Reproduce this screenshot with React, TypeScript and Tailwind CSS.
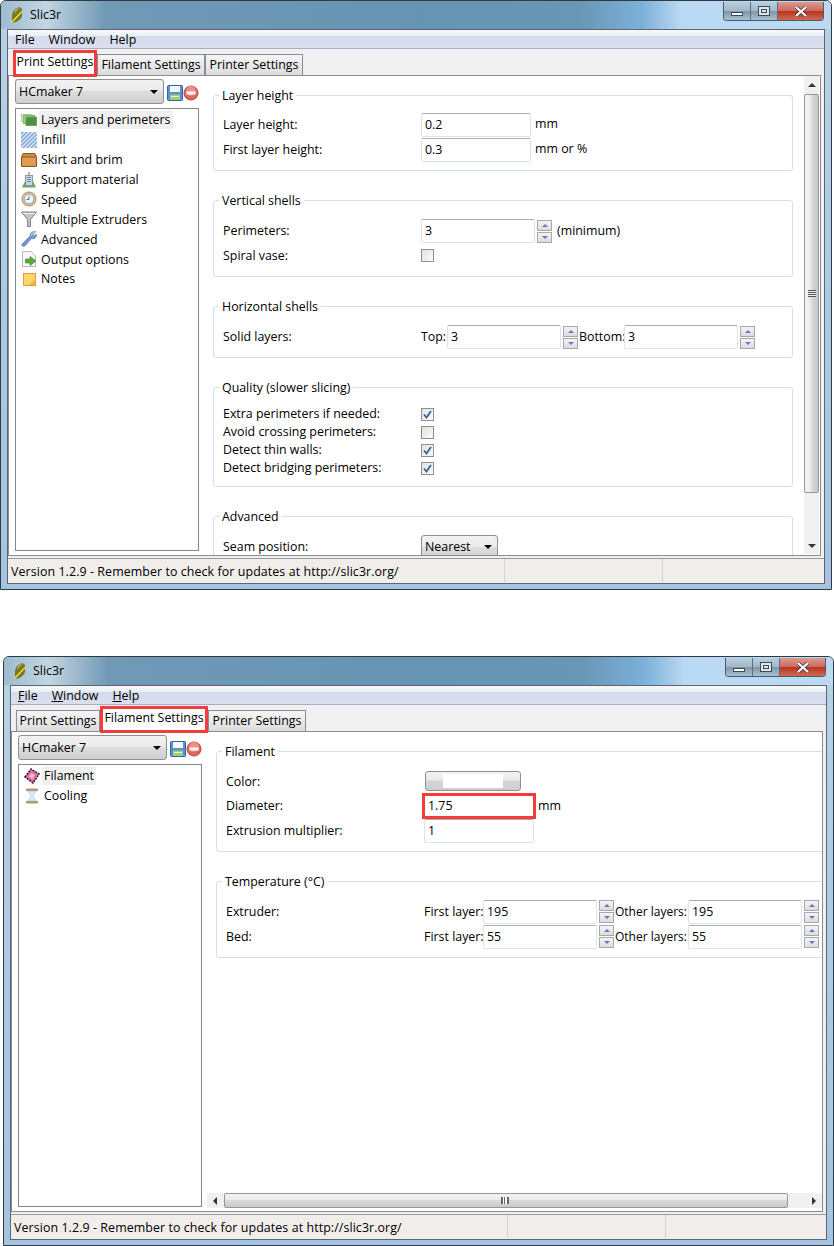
import type { ReactNode } from "react"

const floppy = (
  <svg viewBox="0 0 16 16" className="h-4 w-4 shrink-0">
    <rect x="0.5" y="0.5" width="15" height="15" rx="1" fill="#5b8fd6" stroke="#2f62ad" />
    <rect x="3" y="1" width="10" height="6" fill="#f4f7fb" />
    <rect x="3" y="9.5" width="10" height="5.5" fill="#9ed070" />
    <rect x="4" y="11" width="8" height="1" fill="#e7f3dc" />
  </svg>
)

const stopIcon = (
  <svg viewBox="0 0 16 16" className="h-4 w-4 shrink-0">
    <circle cx="8" cy="8" r="7" fill="#e0655f" stroke="#b9423c" />
    <circle cx="8" cy="6" r="5" fill="#ef8e88" />
    <rect x="3.5" y="6.5" width="9" height="3" fill="#fff" />
  </svg>
)

const logo = (
  <svg viewBox="0 0 12 16" className="h-[16px] w-3 shrink-0">
    <path d="M1 9 C1 5 3 2 7 0.5 C9 0 11 1 11 3 L11 8 C11 11 8 14 4 15.5 C2 16 1 15 1 13 Z" fill="#77752c" />
    <path d="M4 1.5 L9 1 L3 7 Z" fill="#a5a35a" />
    <path d="M1 15 L11 4.5" stroke="#ebe21c" strokeWidth="1.7" />
  </svg>
)

const icons: Record<string, ReactNode> = {
  layers: (
    <svg viewBox="0 0 16 16" className="h-4 w-4">
      <rect x="0.5" y="2.5" width="10" height="7" fill="#d6efc9" stroke="#a6cf98" />
      <rect x="2.5" y="3.5" width="11" height="8" fill="#9bcf86" stroke="#7fb46c" />
      <rect x="5" y="5" width="10.5" height="8.5" fill="#4d8f45" stroke="#6ba362" />
    </svg>
  ),
  infill: (
    <svg viewBox="0 0 16 16" className="h-4 w-4">
      <rect width="16" height="16" fill="#dce8f6" />
      <path d="M-2 4 L4 -2 M-2 8 L8 -2 M-2 12 L12 -2 M-2 16 L16 -2 M2 16 L16 2 M6 16 L16 6 M10 16 L16 10 M14 16 L16 14" stroke="#7fa3d3" strokeWidth="1.4" />
    </svg>
  ),
  box: (
    <svg viewBox="0 0 16 16" className="h-4 w-4">
      <path d="M2 1.5 H14 L15.5 5 V14.5 H0.5 V5 Z" fill="#c98b4a" stroke="#8a5a26" />
      <rect x="1.5" y="5" width="13" height="8.5" fill="#e59a52" />
      <path d="M1 5 H15" stroke="#8a5a26" />
    </svg>
  ),
  building: (
    <svg viewBox="0 0 16 16" className="h-4 w-4">
      <path d="M8 0 V3" stroke="#d43c3c" />
      <rect x="4.5" y="3.5" width="7" height="10" fill="#c9d4df" stroke="#8797a8" />
      <path d="M6 5.5 H10 M6 7.5 H10 M6 9.5 H10" stroke="#6f8fb4" />
      <path d="M1 15.5 L3.5 10 H4.5 V14 H11.5 V10 H12.5 L15 15.5 Z" fill="#6da35f" />
    </svg>
  ),
  clock: (
    <svg viewBox="0 0 16 16" className="h-4 w-4">
      <circle cx="8" cy="8" r="7" fill="#dcc49a" stroke="#a88a58" />
      <circle cx="8" cy="8" r="4.8" fill="#f3f7fb" stroke="#8ba7c6" />
      <path d="M8 5 V8.5 H5.5" stroke="#4d6b94" fill="none" />
    </svg>
  ),
  funnel: (
    <svg viewBox="0 0 16 16" className="h-4 w-4">
      <path d="M0.5 1 H15.5 L9.5 8.5 V15.5 H6.5 V8.5 Z" fill="#c4c4c4" stroke="#7f7f7f" />
      <path d="M2 2.5 H14" stroke="#f2f2f2" />
    </svg>
  ),
  wrench: (
    <svg viewBox="0 0 16 16" className="h-4 w-4">
      <path d="M1 13 L9 5 C9 2 11 0 15 0.5 L12 3.5 L13 5 L15.5 3 C16 7 13 8.5 10.5 7.5 L4 15 C2 16 0 15 1 13 Z" fill="#6f97cf" stroke="#5d7ea8" strokeWidth="0.6" />
      <path d="M10 5 L12 1.5 L15 1" stroke="#d0d0d0" fill="none" />
    </svg>
  ),
  output: (
    <svg viewBox="0 0 16 16" className="h-4 w-4">
      <path d="M1.5 0.5 H10 L14.5 5 V15.5 H1.5 Z" fill="#f7f7f7" stroke="#b8b8b8" />
      <path d="M4.5 8 H9 V5.5 L15 10 L9 14.5 V12 H4.5 Z" fill="#58a83c" stroke="#3f7f2a" strokeWidth="0.6" />
    </svg>
  ),
  notes: (
    <svg viewBox="0 0 16 16" className="h-4 w-4">
      <rect x="2.5" y="2.5" width="12" height="12" fill="#f7d76c" stroke="#e79a3a" />
      <path d="M8 14 L14 8 V14 Z" fill="#f5b342" />
    </svg>
  ),
  filament: (
    <svg viewBox="0 0 16 16" className="h-4 w-4">
      <path d="M1 9 L7 1 L15 6 L9 15 Z" fill="#ee6aa6" stroke="#222" strokeWidth="1.5" strokeDasharray="2 1" />
      <path d="M5 8.5 L7.5 5 L11 7 L8.5 11 Z" fill="#ffb6d6" />
    </svg>
  ),
  cooling: (
    <svg viewBox="0 0 16 16" className="h-4 w-4">
      <rect x="2" y="0.5" width="12" height="2.5" rx="1" fill="#b8916a" />
      <rect x="2" y="13" width="12" height="2.5" rx="1" fill="#b8916a" />
      <path d="M3.5 3 H12.5 L8.8 8 L12.5 13 H3.5 L7.2 8 Z" fill="#dbeafa" stroke="#a8c2de" strokeWidth="0.6" />
    </svg>
  ),
}

function Spin() {
  return (
    <div className="ml-[2px] flex w-[15px] shrink-0 flex-col gap-px">
      <div className="flex h-[11px] items-center justify-center border border-[#a8a8a8] bg-[linear-gradient(#f4f4f4,#dcdcdc)]">
        <div className="h-0 w-0 border-x-[3px] border-b-[3px] border-x-transparent border-b-[#6b77c0]" />
      </div>
      <div className="flex h-[11px] items-center justify-center border border-[#a8a8a8] bg-[linear-gradient(#f4f4f4,#dcdcdc)]">
        <div className="h-0 w-0 border-x-[3px] border-t-[3px] border-x-transparent border-t-[#6b77c0]" />
      </div>
    </div>
  )
}

function Input({ value, wide }: { value: string; wide?: boolean }) {
  return (
    <div
      className={
        (wide ? "w-[114px]" : "w-[110px]") +
        " flex h-[24px] shrink-0 items-center rounded-[2px] border border-[#dde3ea] border-t-[#abadb3] bg-white pl-[3px] pt-[1px]"
      }
    >
      {value}
    </div>
  )
}

function Check({ on }: { on?: boolean }) {
  return (
    <div className="flex h-[13px] w-[13px] items-center justify-center border border-[#8e8f8f] bg-[linear-gradient(135deg,#e2e2e2,#fbfbfb)]">
      {on && (
        <svg viewBox="0 0 11 11" className="h-[11px] w-[11px]">
          <path d="M2 5.5 L4.5 8.5 L9 2" fill="none" stroke="#3c5f9c" strokeWidth="1.8" />
        </svg>
      )}
    </div>
  )
}

function Row({ label, h, children }: { label: string; h: string; children?: ReactNode }) {
  return (
    <div className={h + " flex items-center whitespace-nowrap"}>
      <span className="w-[198px] shrink-0 pt-[1px]">{label}</span>
      {children}
    </div>
  )
}

function Group({ title, className, children }: { title: string; className: string; children: ReactNode }) {
  return (
    <div className={"relative shrink-0 rounded-[3px] border border-[#d5dfe5] pl-[9px] " + className}>
      <span className="absolute -top-[9px] left-[5px] bg-white px-[3px] leading-[18px]">{title}</span>
      {children}
    </div>
  )
}

function Combo({ text, className }: { text: string; className: string }) {
  return (
    <div className={"flex items-center justify-between rounded-[3px] border border-[#8e8f8f] bg-[linear-gradient(#f2f2f2_0%,#ebebeb_45%,#dddddd_50%,#cfcfcf_100%)] pl-[3px] pr-[5px] " + className}>
      <span className="pt-[1px]">{text}</span>
      <div className="h-0 w-0 border-x-[4px] border-t-[4px] border-x-transparent border-t-black" />
    </div>
  )
}

function Tree({ items }: { items: [string, string][] }) {
  return (
    <div className="ml-[6px] mt-[4px] h-[443px] w-[184px] border border-[#828790] bg-white pt-[1px]">
      {items.map(([icon, label], i) => (
        <div key={label} className="flex h-[19.875px] items-center pl-[5px]">
          <div className="mr-[2px] w-[16px] shrink-0">{icons[icon]}</div>
          <span className={(i === 0 ? "bg-[#f0f0f0] " : "") + "px-[2px] leading-[19px]"}>{label}</span>
        </div>
      ))}
    </div>
  )
}

function Tab({ label, selected, boxed, w }: { label: string; selected?: boolean; boxed?: boolean; w: string }) {
  return (
    <div
      className={
        w +
        " relative flex items-center justify-center whitespace-nowrap border border-[#898c95] " +
        (selected
          ? "z-10 h-[25px] border-b-0 bg-white pb-[2px]"
          : "mb-[-1px] h-[22px] bg-[linear-gradient(#f6f6f6,#dcdcdc)]")
      }
    >
      {label}
      {boxed && <div className="pointer-events-none absolute -inset-x-[1px] -bottom-[2px] -top-[1px] border-[3px] border-[#f33b3b]" />}
    </div>
  )
}

function Caption() {
  return (
    <div className="absolute right-[7px] top-[1px] flex h-[19px] overflow-hidden rounded-b-[4px] border border-t-0 border-[#4a5a68]">
      <div className="flex w-[27px] items-end justify-center border-r border-[#5d6d7b] bg-[linear-gradient(#b9cede,#a3b8c8_48%,#7f97a9_52%,#aac0cf)] pb-[4px]">
        <div className="h-[4px] w-[12px] border border-[#3c4a55] bg-white" />
      </div>
      <div className="flex w-[27px] items-center justify-center border-r border-[#5d6d7b] bg-[linear-gradient(#b9cede,#a3b8c8_48%,#7f97a9_52%,#aac0cf)]">
        <div className="h-[10px] w-[12px] border border-[#3c4a55] bg-[#dbe6ee] p-[2px]">
          <div className="h-full w-full border border-[#3c4a55]" />
        </div>
      </div>
      <div className="flex w-[45px] items-center justify-center bg-[linear-gradient(#dd9a90,#cc6a5e_48%,#b8331f_52%,#d06a55)]">
        <svg viewBox="0 0 14 11" className="h-[11px] w-[14px]">
          <path d="M2 1 L12 10 M12 1 L2 10" stroke="#3c3c3c" strokeWidth="3.6" />
          <path d="M2 1 L12 10 M12 1 L2 10" stroke="#fff" strokeWidth="2.2" />
        </svg>
      </div>
    </div>
  )
}

function Window({ className, tab, tree, children, scrollbar, underlined }: {
  className: string
  tab: number
  tree: [string, string][]
  children: ReactNode
  scrollbar: ReactNode
  underlined?: boolean
}) {
  return (
    <div className={"relative h-[590px] overflow-hidden rounded-t-[6px] border border-[#2e3a44] bg-[linear-gradient(#b9d1e4,#a9c8e4_60%,#a6c4df)] " + className}>
      <div className="flex h-[28px] items-center bg-[linear-gradient(90deg,#9dbbd0_0px,#c3d5e0_45px,#7099b6_105px,#6894b3_420px,#6b97b7_580px,#7cb0d8_640px,#b9d8f3_680px,#bcd9f0_100%)] pl-[10px]">
        {logo}
        <span className="ml-[7px] pt-[1px]">Slic3r</span>
      </div>
      <Caption />
      <div className="mx-[6px] h-[555px] border border-[#5b6670] bg-[#f0f0f0]">
        <div className="flex h-[19px] items-center gap-[14px] border-b border-[#a9aec4] bg-[linear-gradient(#f7f8fb,#eef0f8_30%,#d6dcec_35%,#d9dfee)] pl-[7px] pt-[2px]">
          <span className={underlined ? "[&::first-letter]:underline" : ""}>File</span>
          <span className={underlined ? "[&::first-letter]:underline" : ""}>Window</span>
          <span className={underlined ? "[&::first-letter]:underline" : ""}>Help</span>
        </div>
        <div className="flex h-[26px] items-end pl-[5px]">
          <Tab label="Print Settings" w="w-[84px]" selected={tab === 0} boxed={tab === 0} />
          <Tab label="Filament Settings" w="w-[108px]" selected={tab === 1} boxed={tab === 1} />
          <Tab label="Printer Settings" w="w-[98px]" />
        </div>
        <div className="mr-[3px] flex h-[481px] border border-[#898c95] bg-white">
          <div className="w-[195px] shrink-0">
            <div className="ml-[6px] mt-[3px] flex items-center">
              <Combo text="HCmaker 7" className="h-[25px] w-[149px]" />
              <div className="ml-[3px] mt-[2px]">{floppy}</div>
              <div className="mt-[2px]">{stopIcon}</div>
            </div>
            <Tree items={tree} />
          </div>
          {children}
          {scrollbar}
        </div>
        <div className="mt-[2px] flex h-[24px] items-center border-t border-[#9a9a9a] bg-[#f0edeb]">
          <span className="ml-[3px] w-[493px] whitespace-nowrap pt-[3px] tracking-[0.09px]">Version 1.2.9 - Remember to check for updates at http://slic3r.org/</span>
          <div className="h-full w-[158px] border-l border-[#d4d4d4]" />
          <div className="h-full border-l border-[#d4d4d4]" />
        </div>
      </div>
    </div>
  )
}

function PrintBody() {
  return (
    <div className="flex h-full w-[600px] shrink-0 flex-col gap-[29px] overflow-hidden pl-[9px] pt-[19px]">
      <Group title="Layer height" className="h-[76px] w-[580px] pt-[16px]">
        <Row label="Layer height:" h="h-[25px]"><Input value="0.2" /><span className="ml-[4px]">mm</span></Row>
        <Row label="First layer height:" h="h-[25px]"><Input value="0.3" /><span className="ml-[4px]">mm or %</span></Row>
      </Group>
      <Group title="Vertical shells" className="h-[77px] w-[580px] pt-[18px]">
        <Row label="Perimeters:" h="h-[24px]"><Input value="3" wide /><Spin /><span className="ml-[5px]">(minimum)</span></Row>
        <Row label="Spiral vase:" h="h-[25px]"><Check /></Row>
      </Group>
      <Group title="Horizontal shells" className="h-[52px] w-[580px] pt-[18px]">
        <Row label="Solid layers:" h="h-[24px]">
          <span className="w-[26px] pt-[1px]">Top:</span><Input value="3" wide /><Spin />
          <span className="ml-px w-[45px] pt-[1px]">Bottom:</span><Input value="3" wide /><Spin />
        </Row>
      </Group>
      <Group title="Quality (slower slicing)" className="h-[100px] w-[580px] pt-[17px]">
        <Row label="Extra perimeters if needed:" h="h-[18px]"><Check on /></Row>
        <Row label="Avoid crossing perimeters:" h="h-[18px]"><Check /></Row>
        <Row label="Detect thin walls:" h="h-[18px]"><Check on /></Row>
        <Row label="Detect bridging perimeters:" h="h-[18px]"><Check on /></Row>
      </Group>
      <Group title="Advanced" className="h-[90px] w-[580px] pt-[17px]">
        <Row label="Seam position:" h="h-[25px]"><Combo text="Nearest" className="mt-[1px] h-[25px] w-[77px]" /></Row>
      </Group>
    </div>
  )
}

function FilamentBody() {
  const temp = (label: string, value: string) => (
    <Row label={label} h="h-[25px]">
      <span className="w-[59px] pt-[1px]">First layer:</span><Input value={value} wide /><Spin />
      <span className="ml-px w-[73px] pt-[1px] text-[12px]">Other layers:</span><Input value={value} wide /><Spin />
    </Row>
  )
  return (
    <div className="flex h-full min-w-0 flex-1 flex-col">
      <div className="flex min-h-0 flex-1 flex-col gap-[29px] overflow-hidden pl-[9px] pt-[19px]">
        <Group title="Filament" className="h-[101px] w-[660px] pt-[19px]">
          <Row label="Color:" h="h-[22px]">
            <div className="mb-[3px] ml-px flex h-[20px] w-[96px] items-center justify-center rounded-[3px] border border-[#8e8f8f] bg-[linear-gradient(#f2f2f2,#ebebeb_45%,#d4d4d4_50%,#cfcfcf)]">
              <div className="h-[14px] w-[60px] bg-white" />
            </div>
          </Row>
          <Row label="Diameter:" h="h-[25px]">
            <div className="relative">
              <Input value="1.75" />
              <div className="absolute -inset-x-[2px] -bottom-px -top-px border-[3px] border-[#f33b3b]" />
            </div>
            <span className="ml-[4px] pt-[1px]">mm</span>
          </Row>
          <Row label="Extrusion multiplier:" h="h-[25px]"><Input value="1" /></Row>
        </Group>
        <Group title="Temperature (°C)" className="h-[77px] w-[660px] pt-[17px]">
          {temp("Extruder:", "195")}
          {temp("Bed:", "55")}
        </Group>
      </div>
      <div className="mb-[3px] flex h-[15px] shrink-0 items-stretch bg-[#f0f0f0]">
        <div className="flex w-[16px] items-center justify-center">
          <div className="h-0 w-0 border-y-[4px] border-r-[4px] border-y-transparent border-r-[#333]" />
        </div>
        <div className="relative ml-px w-[564px] rounded-[2px] border border-[#979797] bg-[linear-gradient(#f2f2f2,#ebebeb_45%,#d9d9d9_50%,#c9c9c9)]">
          <div className="absolute left-[276px] top-[3px] h-[7px] w-[8px] border-x-[2px] border-[#666] bg-[linear-gradient(90deg,#fff_30%,#666_30%,#666_60%,#fff_60%)]" />
        </div>
        <div className="flex flex-1 items-center justify-end pr-[6px]">
          <div className="h-0 w-0 border-y-[4px] border-l-[4px] border-y-transparent border-l-[#333]" />
        </div>
      </div>
    </div>
  )
}

const vbar = (
  <div className="flex h-[478px] w-[15px] shrink-0 flex-col bg-[#f0f0f0]">
    <div className="flex h-[17px] items-center justify-center">
      <div className="h-0 w-0 border-x-[4px] border-b-[4px] border-x-transparent border-b-[#333]" />
    </div>
    <div className="relative mt-[1px] flex h-[399px] items-center justify-center rounded-[2px] border border-[#979797] bg-[linear-gradient(90deg,#f4f4f4,#e8e8e8_45%,#d6d6d6_55%,#c6c6c6)]">
      <div className="h-[7px] w-[8px] bg-[linear-gradient(#555_1px,#eee_1px,#eee_2px,#555_2px,#555_3px,#eee_3px,#eee_4px,#555_4px,#555_5px,#eee_5px,#eee_6px,#555_6px)]" />
    </div>
    <div className="mt-auto flex h-[17px] items-center justify-center">
      <div className="h-0 w-0 border-x-[4px] border-t-[4px] border-x-transparent border-t-[#333]" />
    </div>
  </div>
)

export default function App() {
  return (
    <div className="h-[1246px] w-[834px] overflow-hidden bg-white font-['Open_Sans',sans-serif] text-[12.4px] leading-none text-black">
      <Window
        className="w-[832px]"
        tab={0}
        scrollbar={vbar}
        tree={[
          ["layers", "Layers and perimeters"],
          ["infill", "Infill"],
          ["box", "Skirt and brim"],
          ["building", "Support material"],
          ["clock", "Speed"],
          ["funnel", "Multiple Extruders"],
          ["wrench", "Advanced"],
          ["output", "Output options"],
          ["notes", "Notes"],
        ]}
      >
        <PrintBody />
      </Window>
      <Window
        className="ml-[3px] mt-[66px] w-[831px]"
        tab={1}
        underlined
        scrollbar={null}
        tree={[
          ["filament", "Filament"],
          ["cooling", "Cooling"],
        ]}
      >
        <FilamentBody />
      </Window>
    </div>
  )
}
